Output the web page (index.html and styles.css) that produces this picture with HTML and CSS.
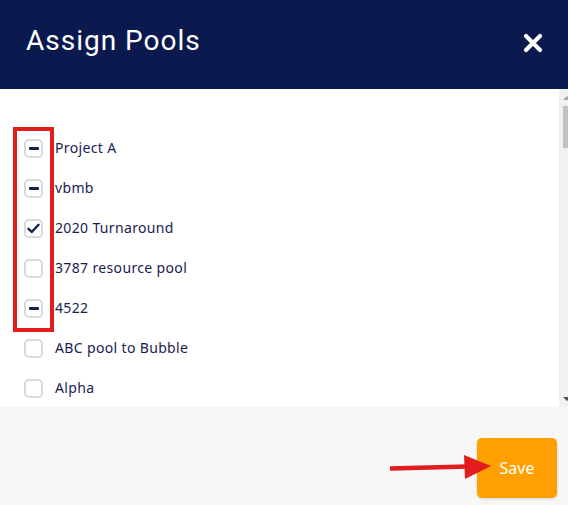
FILE: index.html
```html
<!DOCTYPE html>
<html>
<head>
<meta charset="utf-8">
<link rel="stylesheet" href="styles.css">
</head>
<body>
<div class="dialog">
  <header class="head">
    <h1 class="title">Assign Pools</h1>
    <svg class="close" width="20" height="20" viewBox="0 0 20 20"><path d="M3 3 L17 17 M17 3 L3 17" stroke="#fff" stroke-width="4.2" stroke-linecap="round"/></svg>
  </header>
  <div class="body">
    <ul class="list">
      <li class="row"><span class="box minus"></span><span class="label">Project A</span></li>
      <li class="row"><span class="box minus"></span><span class="label">vbmb</span></li>
      <li class="row"><span class="box"><svg width="13" height="11" viewBox="0 0 13 11"><path d="M1.5 5.8 L4.8 9 L11.5 1.8" fill="none" stroke="#17204d" stroke-width="2.4" stroke-linecap="round" stroke-linejoin="round"/></svg></span><span class="label">2020 Turnaround</span></li>
      <li class="row"><span class="box"></span><span class="label">3787 resource pool</span></li>
      <li class="row"><span class="box minus"></span><span class="label">4522</span></li>
      <li class="row"><span class="box"></span><span class="label">ABC pool to Bubble</span></li>
      <li class="row"><span class="box"></span><span class="label">Alpha</span></li>
    </ul>
    <div class="highlight"></div>
    <div class="scrollbar">
      <div class="sb-inner">
        <span class="sb-up"></span>
        <span class="sb-thumb"></span>
        <span class="sb-space"></span>
        <span class="sb-down"></span>
      </div>
    </div>
  </div>
  <footer class="foot">
    <svg class="pointer" width="104" height="26" viewBox="0 0 104 26"><path d="M2 14.5 L80 12.5" stroke="#e21d1d" stroke-width="4.5"/><path d="M76 1 L103 12 L77 25 Z" fill="#e21d1d"/></svg>
    <button class="save">Save</button>
  </footer>
</div>
</body>
</html>
```
FILE: styles.css
```css
html, body {
  margin: 0;
  padding: 0;
  background: #ffffff;
  overflow: hidden;
}
body {
  font-family: "Noto Sans", "Liberation Sans", sans-serif;
}
.dialog {
  width: 568px;
  height: 505px;
  display: flex;
  flex-direction: column;
}
.head {
  height: 89px;
  flex: none;
  background: #0a1a4e;
  display: flex;
  align-items: center;
  justify-content: space-between;
  padding: 0 25px 0 26px;
  box-sizing: border-box;
}
.title {
  margin: 0;
  font-family: Roboto, "Liberation Sans", sans-serif;
  font-weight: 400;
  font-size: 28px;
  color: #ffffff;
  letter-spacing: 1px;
  position: relative;
  top: -4px;
}
.close {
  display: block;
  position: relative;
  top: -2px;
}
.body {
  height: 318px;
  flex: none;
  display: flex;
  position: relative;
  background: #fff;
}
.list {
  list-style: none;
  margin: 0;
  padding: 38px 0 0 24px;
  flex: 1;
}
.row {
  height: 40px;
  display: flex;
  align-items: center;
  gap: 12px;
}
.box {
  width: 19px;
  height: 19px;
  box-sizing: border-box;
  border: 2px solid #d9d9d9;
  border-radius: 5px;
  display: flex;
  align-items: center;
  justify-content: center;
  flex: none;
  position: relative;
  top: 1px;
}
.box.minus::before {
  content: "";
  width: 10px;
  height: 3px;
  border-radius: 1px;
  background: #17204d;
}
.label {
  font-size: 14px;
  color: #1a2150;
  letter-spacing: 0.35px;
}
.highlight {
  position: absolute;
  left: 13px;
  top: 38px;
  width: 41px;
  height: 205px;
  box-sizing: border-box;
  border: 4px solid #e21d1d;
}
.scrollbar {
  width: 9px;
  flex: none;
  overflow: hidden;
  background: #f1f1f1;
}
.sb-inner {
  width: 15px;
  height: 100%;
  display: flex;
  flex-direction: column;
  align-items: center;
}
.sb-up, .sb-down {
  width: 0;
  height: 0;
  border-left: 4px solid transparent;
  border-right: 4px solid transparent;
  flex: none;
}
.sb-up {
  margin-top: 7px;
  border-bottom: 4px solid #a3a3a3;
}
.sb-down {
  margin-bottom: 6px;
  border-top: 4px solid #505050;
}
.sb-thumb {
  margin-top: 6px;
  width: 11px;
  height: 42px;
  background: #c1c1c1;
  flex: none;
  align-self: flex-end;
}
.sb-space {
  flex: 1;
}
.foot {
  flex: 1;
  background: #f7f7f7;
  display: flex;
  justify-content: flex-end;
  align-items: flex-start;
  padding: 31px 11px 0 0;
  position: relative;
}
.pointer {
  position: absolute;
  left: 388px;
  top: 47px;
}
.save {
  width: 80px;
  height: 60px;
  border: none;
  border-radius: 5px;
  background: #ffa000;
  color: #ffffff;
  font-family: "Noto Sans", "Liberation Sans", sans-serif;
  font-size: 16px;
  box-shadow: 0 1px 3px rgba(0,0,0,0.15);
  padding: 0;
}
```
